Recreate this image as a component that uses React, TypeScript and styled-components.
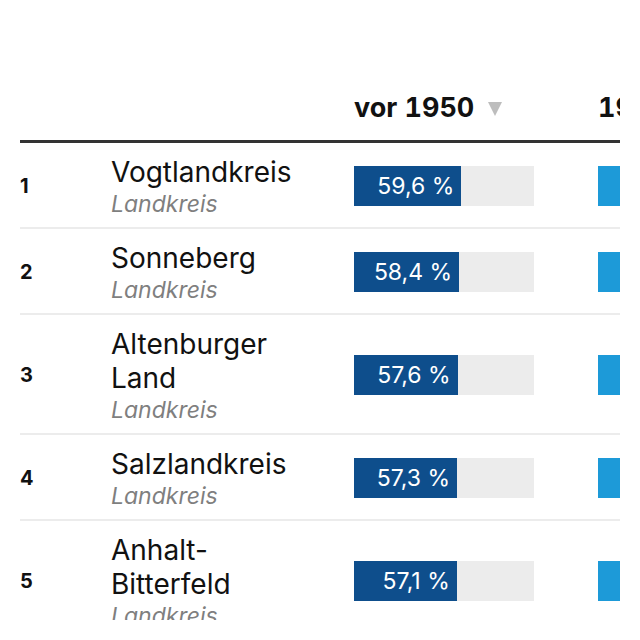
import React from "react";
import styled, { createGlobalStyle } from "styled-components";

const Global = createGlobalStyle`
  html, body { margin: 0; padding: 0; background: #fff; }
  body {
    font-family: Inter, "Noto Sans", "Liberation Sans", sans-serif;
    color: #111;
  }
`;

const Frame = styled.div`
  width: 600px;
  height: 527px;
  margin-left: 20px;
  padding-top: 93px;
  overflow: hidden;
`;

const Table = styled.table`
  border-collapse: collapse;
  table-layout: fixed;
  width: 822px;
`;

const Th = styled.th<{ $w: number }>`
  width: ${(p) => p.$w}px;
  text-align: left;
  font-size: 27px;
  line-height: 30px;
  font-weight: 700;
  font-feature-settings: "tnum" 1;
  padding: 0 0 17px 0;
  border-bottom: 3px solid #333;
  white-space: nowrap;
  vertical-align: bottom;
`;

const SortArrow = styled.svg`
  display: inline-block;
  width: 14px;
  height: 14px;
  margin-left: 14px;
  vertical-align: 1px;
`;

const Tr = styled.tr`
  border-bottom: 2px solid #ececec;
`;

const Td = styled.td`
  padding: 0;
  vertical-align: middle;
`;

const NameCell = styled(Td)`
  padding: 12px 30px 8px 0;
`;

const Rank = styled(Td)`
  font-weight: 700;
  font-size: 20px;
  padding-top: 2px;
`;

const Name = styled.div`
  font-size: 28px;
  line-height: 34px;
  color: #111;
`;

const Sub = styled.div`
  font-size: 23px;
  line-height: 30px;
  font-style: italic;
  color: #7f7f7f;
`;

const Bar = styled.div`
  width: 180px;
  height: 40px;
  margin-top: 2px;
  background: #ececec;
  display: flex;
  align-items: center;
`;

const Fill = styled.div<{ $color: string }>`
  background: ${(p) => p.$color};
  color: #fff;
  height: 40px;
  font-size: 23px;
  line-height: 40px;
  text-align: right;
  padding-right: 7px;
  box-sizing: border-box;
  white-space: nowrap;
`;

const Outside = styled.span`
  font-size: 23px;
  color: #111;
  margin-left: 8px;
  white-space: nowrap;
`;

const rows = [
  { rank: 1, name: "Vogtlandkreis", v: 59.6, w: 21.4 },
  { rank: 2, name: "Sonneberg", v: 58.4, w: 22.9 },
  { rank: 3, name: "Altenburger Land", v: 57.6, w: 20.7 },
  { rank: 4, name: "Salzlandkreis", v: 57.3, w: 23.5 },
  { rank: 5, name: "Anhalt-Bitterfeld", v: 57.1, w: 22.1 },
];

const fmt = (n: number) => n.toFixed(1).replace(".", ",") + " %";

function ValueBar({ value, color }: { value: number; color: string }) {
  const inside = value >= 40;
  return (
    <Bar>
      <Fill $color={color} style={{ width: `${value}%` }}>
        {inside ? fmt(value) : null}
      </Fill>
      {inside ? null : <Outside>{fmt(value)}</Outside>}
    </Bar>
  );
}

export default function App() {
  return (
    <>
      <Global />
      <Frame>
        <Table>
          <thead>
            <tr>
              <Th $w={91} />
              <Th $w={243} />
              <Th $w={244}>
                vor 1950
                <SortArrow viewBox="0 0 14 14">
                  <path d="M0 0 H14 L7 14 Z" fill="#bdbdbd" />
                </SortArrow>
              </Th>
              <Th $w={244}>1950 bis 1969</Th>
            </tr>
          </thead>
          <tbody>
            {rows.map((r) => (
              <Tr key={r.rank}>
                <Rank>{r.rank}</Rank>
                <NameCell>
                  <Name>{r.name}</Name>
                  <Sub>Landkreis</Sub>
                </NameCell>
                <Td>
                  <ValueBar value={r.v} color="#0e4e8c" />
                </Td>
                <Td>
                  <ValueBar value={r.w} color="#1d9ad8" />
                </Td>
              </Tr>
            ))}
          </tbody>
        </Table>
      </Frame>
    </>
  );
}
